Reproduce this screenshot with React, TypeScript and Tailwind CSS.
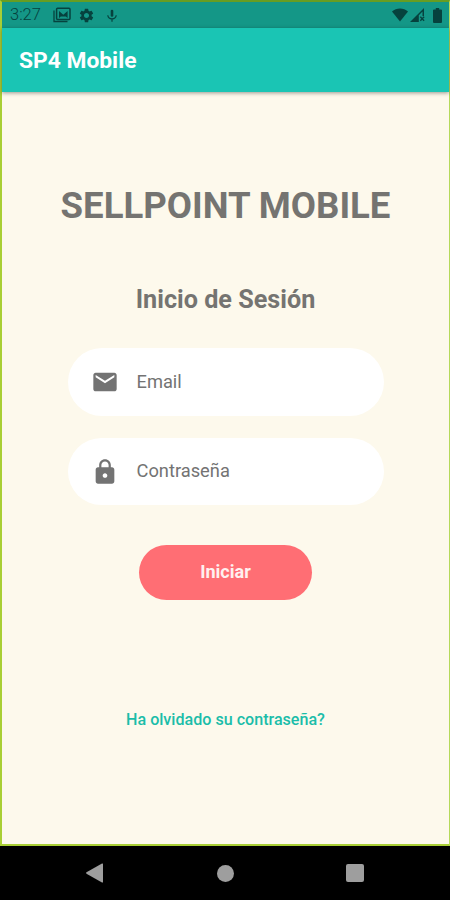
import type { ReactNode } from "react";
import { MdEmail, MdLock, MdSettings } from "react-icons/md";

function StatusBar() {
  return (
    <div className="flex h-[26px] items-center bg-[#149787] text-[#06423e]">
      <span className="ml-[8px] w-[43px] text-[16.5px] leading-none font-light whitespace-nowrap">
        3:27
      </span>
      <svg className="h-[16px] w-[18px]" viewBox="0 0 18 16" fill="none" stroke="currentColor">
        <path d="M1 3.5v11h13.5" strokeWidth="1.3" />
        <rect x="3.6" y="1.2" width="13.4" height="11.2" rx="1" strokeWidth="1.5" />
        <path d="M6 11V4l4.3 3.8L14.6 4v7l-1.8-1.5H7.8z" fill="currentColor" stroke="none" />
      </svg>
      <MdSettings className="ml-[7px] h-[17px] w-[17px]" />
      <svg className="ml-[12px] h-[13px] w-[10px]" viewBox="0 0 10 13" fill="none" stroke="currentColor">
        <path d="M5 2v4.500" strokeWidth="2.600" strokeLinecap="round" />
        <path d="M.8 6.200C1 8.500 2.800 9.800 5 9.800s4-1.300 4.200-3.600M5 9.800v3" strokeWidth="1.200" />
      </svg>
      <svg className="ml-auto h-[14px] w-[16px]" viewBox="0 0 16 14" fill="currentColor">
        <path d="M8 13.5 0 3.6C2.2 1.6 5 .5 8 .5s5.800 1.100 8 3.100z" />
      </svg>
      <svg className="ml-[2px] h-[15px] w-[15px]" viewBox="0 0 15 15" fill="currentColor">
        <path
          fillRule="evenodd"
          d="M0 14 14 0v8h-1.500V3.600L8.800 7.300V14zM9.800 9.300l1-1 1.400 1.500 1.400-1.500 1 1-1.500 1.400 1.500 1.500-1 1-1.400-1.500-1.400 1.500-1-1 1.500-1.500z"
        />
      </svg>
      <svg className="mr-[7px] ml-[8px] h-[15px] w-[9px]" viewBox="0 0 9 15" fill="currentColor">
        <path d="M2.800 0h3.400v1.500H8q1 0 1 1V14q0 1-1 1H1q-1 0-1-1V2.500q0-1 1-1h1.800z" />
      </svg>
    </div>
  );
}

function Field({ icon, label, className }: { icon: ReactNode; label: string; className: string }) {
  return (
    <label className={`flex w-[316px] items-center rounded-full bg-white pl-[23px] text-[#737373] ${className}`}>
      {icon}
      <span className="ml-[18px] text-[18.300px] leading-none whitespace-nowrap">{label}</span>
    </label>
  );
}

function NavBar() {
  return (
    <div className="flex h-[54px] items-center bg-black pl-[86px] text-[#9e9e9e]">
      <svg className="h-[20px] w-[17px]" viewBox="0 0 17 20" fill="currentColor">
        <path d="M.5 9.300 16 .5q1-.4 1 .6v17.800q0 1-1 .6L.5 10.700q-.8-.7 0-1.400z" />
      </svg>
      <div className="ml-[114px] h-[17px] w-[17px] rounded-full bg-[#9e9e9e]" />
      <div className="ml-[112px] h-[18px] w-[18px] rounded-[2px] bg-[#9e9e9e]" />
    </div>
  );
}

export default function App() {
  return (
    <div className="flex h-[900px] w-[450px] flex-col overflow-hidden bg-black font-[Roboto,sans-serif]">
      <div className="flex h-[846px] flex-col border-2 border-r border-[#a9cf35] border-t-[#679d22] border-r-[#b5d95a] bg-[#fdf9ec]">
        <StatusBar />
        <header className="flex h-[64px] shrink-0 items-center bg-[#1ac5b4] pt-[2px] pl-[17px] shadow-[0_1px_4px_rgba(0,0,0,0.4)]">
          <h1 className="text-[22.800px] leading-none font-bold whitespace-nowrap text-white">SP4 Mobile</h1>
        </header>

        <main className="flex flex-col items-center">
          <h2 className="mt-[92px] text-[36.600px] leading-[44px] font-bold whitespace-nowrap text-[#757471]">
            SELLPOINT MOBILE
          </h2>
          <h3 className="mt-[57px] text-[25.200px] leading-[30px] font-bold whitespace-nowrap text-[#757471]">
            Inicio de Sesión
          </h3>
          <Field icon={<MdEmail className="h-[28px] w-[28px]" />} label="Email" className="mt-[33px] h-[68px]" />
          <Field icon={<MdLock className="h-[28px] w-[28px]" />} label="Contraseña" className="mt-[22px] h-[67px]" />
          <button
            type="button"
            className="mt-[40px] h-[55px] w-[173px] rounded-full bg-[#ff6e74] pb-[1px] text-[18px] leading-none font-bold text-[#fff0ef]"
          >
            Iniciar
          </button>
          <a href="#" className="mt-[110px] text-[16.100px] leading-[20px] font-medium whitespace-nowrap text-[#1bbda9]">
            Ha olvidado su contraseña?
          </a>
        </main>
      </div>
      <NavBar />
    </div>
  );
}
